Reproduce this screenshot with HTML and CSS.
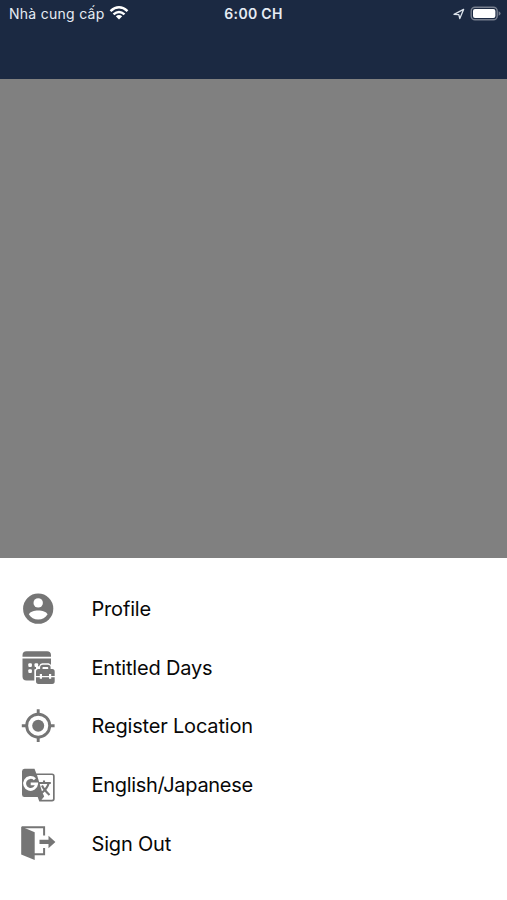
FILE: index.html
```html
<!DOCTYPE html>
<html lang="vi">
<head>
<meta charset="utf-8">
<title>Menu</title>
<link rel="stylesheet" href="styles.css">
</head>
<body>
<div class="screen">
  <header class="header">
    <div class="carrier"><span class="carrier-name">Nhà cung cấp</span>
      <svg class="wifi" viewBox="0 0 20 16" width="20" height="16"><g fill="none" stroke="#fff" stroke-width="2.5"><path d="M1.5 6.1Q10-1.5 18.500 6.100"/><path d="M4.500 9.400Q10 4.600 15.500 9.400"/></g><path d="M6.800 11.300Q10 8.800 13.200 11.300L10 14.600Z" fill="#fff"/></svg>
    </div>
    <div class="time">6:00 CH</div>
    <div class="indicators">
      <svg viewBox="0 0 12 12" width="12" height="12"><path d="M1 6.300L10.600 1.400L6.800 10.600L5.800 6.600Z" fill="none" stroke="#dce3ec" stroke-width="1.300" stroke-linejoin="round"/></svg>
      <svg viewBox="0 0 31 16" width="31" height="16"><rect x="1.200" y="1.200" width="26" height="12.600" rx="3.800" fill="none" stroke="#777f8e" stroke-width="1.400"/><rect x="3" y="3" width="22.400" height="9" rx="2" fill="#fff"/><path d="M28.600 5.200Q30.600 6 30.600 7.500T28.600 9.800Z" fill="#777f8e"/></svg>
    </div>
  </header>
  <main class="backdrop"></main>
  <nav class="sheet">
    <a class="item"><svg class="icon" viewBox="0 0 40 40"><circle cx="20.200" cy="19.700" r="15.100"/><circle class="cut" cx="20.200" cy="13.900" r="4.700"/><path class="cut" d="M10.800 25.200C12.200 22.600 16 21.400 20.200 21.400S28.200 22.600 29.600 25.200C27.600 28.600 24.200 30.600 20.200 30.600S12.800 28.600 10.800 25.200Z"/></svg><span>Profile</span></a>
    <a class="item"><svg class="icon" viewBox="0 0.700 40 40"><path d="M4.500 9.500V8A4 4 0 0 1 8.500 4H29A4 4 0 0 1 33 8V9.500Z"/><path d="M4.500 11.300H33V19H18V33.200H8.500A4 4 0 0 1 4.500 29.200Z"/><g class="cut"><rect x="10.300" y="16" width="3.600" height="3.600" rx="1"/><rect x="16.500" y="16" width="3.600" height="3.600" rx="1"/><rect x="10.300" y="22" width="3.600" height="3.600" rx="1"/><path d="M16.300 22.300L21.300 20.300V18.500Q21.800 16 24.300 16H30.500Q33 16.500 33.300 19L38 22V37H16.300Z"/></g><path d="M18 28.600V24.500Q18 21.800 20.500 21.800H34.200Q36.700 21.800 36.700 24.500V28.600H33.200V26.800H31V28.600H24V26.800H21.800V28.600ZM18 30H21.800V31.500H24V30H31V31.500H33.200V30H36.700V34Q36.700 36.700 34.200 36.700H20.500Q18 36.700 18 34Z"/><path d="M23.300 22.500V20.200Q23.300 18.600 25 18.600H29.700Q31.400 18.600 31.400 20.200V22.500" fill="none" stroke="#757575" stroke-width="2.400"/></svg><span>Entitled Days</span></a>
    <a class="item"><svg class="icon" viewBox="0 0 40 40"><circle cx="20.200" cy="19.700" r="6"/><g fill="none" stroke="#757575" stroke-width="2.900"><circle cx="20.200" cy="19.700" r="11.500"/><path d="M20.200 3.300V8M20.200 31.300V36M3.800 19.700H8.500M31.900 19.700H36.600"/></g></svg><span>Register Location</span></a>
    <a class="item"><svg class="icon" viewBox="0 0 40 40"><path d="M6.500 3.800H16.500L18.300 8.400H34A2.800 2.800 0 0 1 36.700 11.200V33.800A2.800 2.800 0 0 1 34 36.600H21.300L19.700 32H6.500A2.600 2.600 0 0 1 4 29.400V6.400A2.600 2.600 0 0 1 6.500 3.800Z"/><path class="cut" d="M19 10.100H34Q35 10.100 35 11.200V33.700Q35 34.800 34 34.800H23.500L26.200 31.500 24 26.500Z"/><path d="M16.900 14.200A6 6 0 1 0 18.600 18.900H12.700" fill="none" stroke="#fff" stroke-width="2.900"/><path d="M20.900 18H32.800M26 15.400V18M30.700 18C29.700 22.300 27.200 25 24 27.600M24 20.500C25.500 24 28.400 27 31.500 30" fill="none" stroke="#757575" stroke-width="2.100"/></svg><span class="tight">English/Japanese</span></a>
    <a class="item"><svg class="icon" viewBox="0 0.500 40 40"><path d="M3.200 3L16.700 8.700V36.500L3.200 31Z"/><path d="M4 3.800H26.100V12M26.100 24.500V30.700H16" fill="none" stroke="#757575" stroke-width="2"/><path d="M21.500 16.300H30.500V12.300L37.400 18.500 30.500 24.700V20.500H21.500Z"/></svg><span>Sign Out</span></a>
  </nav>
</div>
</body>
</html>
```
FILE: styles.css
```css
* { box-sizing: border-box; }
body { margin: 0; background: #fff; font-family: Inter, "Liberation Sans", sans-serif; }
.screen { width: 507px; height: 900px; display: flex; flex-direction: column; overflow: hidden; }
.header {
  height: 79px; flex: none; background: #1b2942; color: #e6ecf4;
  display: grid; grid-template-columns: 1fr auto 1fr; align-items: start;
}
.carrier { display: flex; align-items: center; gap: 4px; height: 27px; padding-left: 9px; font-size: 14px; letter-spacing: 0.27px; white-space: nowrap; }
.wifi { flex: none; margin-top: -1px; }
.time { height: 27px; line-height: 28px; font-size: 14px; font-weight: 600; letter-spacing: 0.3px; }
.indicators { display: flex; justify-content: flex-end; align-items: center; gap: 5px; height: 27px; padding-right: 6px; }
.backdrop { height: 479px; flex: none; background: #808080; }
.sheet { flex: 1; background: #fff; padding-top: 22px; }
.item { display: flex; align-items: center; height: 58.600px; padding-left: 18px; gap: 33.500px; color: #080808; font-size: 20px; letter-spacing: -0.18px; white-space: nowrap; }
.tight { letter-spacing: -0.3px; }
.icon { width: 40px; height: 40px; flex: none; fill: #757575; }
.cut { fill: #fff; }
```
